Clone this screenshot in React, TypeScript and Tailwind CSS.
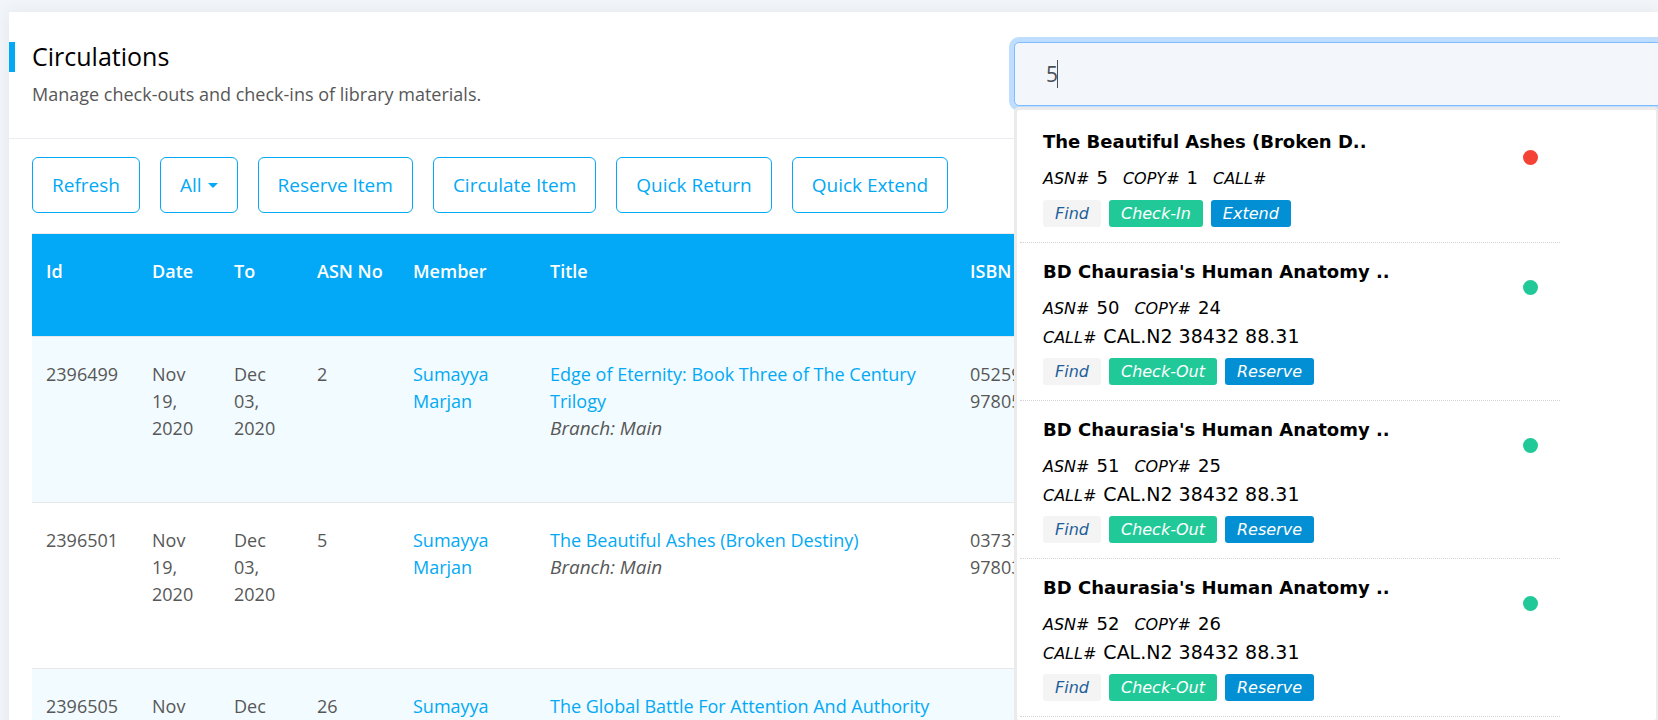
type Loan = {
  id: string;
  from: string[];
  to: string[];
  asn: string;
  member: string;
  title: string;
  branch: string;
  isbn: string[];
};

type Copy = {
  title: string;
  asn: string;
  copy: string;
  call: string;
  available: boolean;
};

const actions = ["Refresh", "All", "Reserve Item", "Circulate Item", "Quick Return", "Quick Extend"];

const loans: Loan[] = [
  {
    id: "2396499",
    from: ["Nov", "19,", "2020"],
    to: ["Dec", "03,", "2020"],
    asn: "2",
    member: "Sumayya Marjan",
    title: "Edge of Eternity: Book Three of The Century Trilogy",
    branch: "Branch: Main",
    isbn: ["05259", "97805"],
  },
  {
    id: "2396501",
    from: ["Nov", "19,", "2020"],
    to: ["Dec", "03,", "2020"],
    asn: "5",
    member: "Sumayya Marjan",
    title: "The Beautiful Ashes (Broken Destiny)",
    branch: "Branch: Main",
    isbn: ["03737", "97803"],
  },
  {
    id: "2396505",
    from: ["Nov", "19,", "2020"],
    to: ["Dec", "03,", "2020"],
    asn: "26",
    member: "Sumayya Marjan",
    title: "The Global Battle For Attention And Authority",
    branch: "Branch: Main",
    isbn: [],
  },
];

const copies: Copy[] = [
  { title: "The Beautiful Ashes (Broken D..", asn: "5", copy: "1", call: "", available: false },
  { title: "BD Chaurasia's Human Anatomy ..", asn: "50", copy: "24", call: "CAL.N2 38432 88.31", available: true },
  { title: "BD Chaurasia's Human Anatomy ..", asn: "51", copy: "25", call: "CAL.N2 38432 88.31", available: true },
  { title: "BD Chaurasia's Human Anatomy ..", asn: "52", copy: "26", call: "CAL.N2 38432 88.31", available: true },
];

function Field({ label, value }: { label: string; value: string }) {
  return (
    <span className="flex h-[29px] items-baseline gap-[7px]">
      <i className="text-[16px] leading-[29px]">{label}</i>
      {value && <span>{value}</span>}
    </span>
  );
}

function Result({ item }: { item: Copy }) {
  const badge = "h-[27px] rounded-[3px] px-3 text-[16px] leading-[27px] italic";
  return (
    <li className="flex w-[540px] items-start justify-between border-b border-dotted border-[#d3d3d3] pt-[14px] pr-[22px] pb-[15px] pl-[23px]">
      <div>
        <h3 className="text-[18px] leading-[29px] font-bold">{item.title}</h3>
        <div className="mt-[7px] flex flex-col text-[18px] leading-[29px]">
          <div className="flex items-baseline gap-[15px]">
            <Field label="ASN#" value={item.asn} />
            <Field label="COPY#" value={item.copy} />
            {!item.call && <Field label="CALL#" value="" />}
          </div>
          {item.call && (
            <div className="text-[19px]">
              <Field label="CALL#" value={item.call} />
            </div>
          )}
        </div>
        <div className="mt-[7px] flex gap-2">
          <button type="button" className={`${badge} bg-[#f4f4f4] text-[#1f5f99]`}>Find</button>
          <button type="button" className={`${badge} bg-[#22c998] text-white`}>
            {item.available ? "Check-Out" : "Check-In"}
          </button>
          <button type="button" className={`${badge} bg-[#038fd3] text-white`}>
            {item.available ? "Reserve" : "Extend"}
          </button>
        </div>
      </div>
      <span
        className={`mt-[23px] size-[15px] rounded-full ${item.available ? "bg-[#22c998]" : "bg-[#f44336]"}`}
      />
    </li>
  );
}

export default function App() {
  return (
    <div className="min-h-screen overflow-x-hidden bg-[#f2f5f9] pt-3 pl-[9px] font-['Open_Sans',sans-serif] text-[18px] leading-[27px] text-[#575757]">
      <main className="min-h-full bg-white shadow-[0_1px_15px_1px_rgba(69,65,78,0.08)]">
        <header className="flex h-[127px] border-b border-[#ebedf2]">
          <div className="flex-1 pt-[30px]">
            <h1 className="border-l-[6px] border-[#03a9f4] pb-[2px] pl-[17px] text-[25px] leading-[28px] text-black">
              Circulations
            </h1>
            <p className="mt-[9px] pl-[23px]">Manage check-outs and check-ins of library materials.</p>
          </div>
          <div className="relative z-10 mt-[30px] -mr-1 h-16 w-[648px] shrink-0">
            <input
              type="text"
              aria-label="Search items"
              defaultValue="5"
              className="h-16 w-full rounded-[5px] border border-[#80bdff] bg-[#f3f6fa] pl-[31px] text-[21px] text-[#495057] caret-transparent shadow-[0_0_0_5px_#bfdeff] outline-none"
            />
            <span className="absolute top-[18px] left-[43px] h-7 w-px bg-[#495057]" />
            <ul className="absolute top-[65px] right-[3px] left-0 rounded-[5px] border-[3px] border-[#ebebeb] bg-white p-[3px] font-['Verdana','DejaVu_Sans',sans-serif] text-black">
              {copies.map((item) => (
                <Result key={item.asn} item={item} />
              ))}
            </ul>
          </div>
        </header>

        <div className="flex gap-5 pt-[18px] pl-[23px]">
          {actions.map((label) => (
            <button
              key={label}
              type="button"
              className="flex h-14 items-center rounded-[6px] border border-[#03a9f4] px-[19px] text-[19px] text-[#03a9f4]"
            >
              {label}
              {label === "All" && (
                <span className="ml-[6px] border-x-[5px] border-t-[5px] border-x-transparent border-t-[#03a9f4]" />
              )}
            </button>
          ))}
        </div>

        <div className="pt-5 pl-[23px]">
          <table className="w-full table-fixed border-collapse text-left align-top">
            <colgroup>
              <col className="w-[106px]" />
              <col className="w-[82px]" />
              <col className="w-[83px]" />
              <col className="w-[96px]" />
              <col className="w-[137px]" />
              <col className="w-[420px]" />
              <col />
            </colgroup>
            <thead>
              <tr className="border-t border-[#ebebeb] bg-[#03a9f7] text-white">
                {["Id", "Date", "To", "ASN No", "Member", "Title", "ISBN"].map((name) => (
                  <th key={name} className="pt-6 pb-[51px] pl-[14px] font-semibold whitespace-nowrap">
                    {name}
                  </th>
                ))}
              </tr>
            </thead>
            <tbody>
              {loans.map((loan) => (
                <tr
                  key={loan.id}
                  className="border-t border-[#e6e9ea] align-top odd:bg-[#f2fbff] [&>td]:pt-6 [&>td]:pb-[60px] [&>td]:pl-[14px]"
                >
                  <td>{loan.id}</td>
                  <td>
                    {loan.from.map((part) => (
                      <div key={part}>{part}</div>
                    ))}
                  </td>
                  <td>
                    {loan.to.map((part) => (
                      <div key={part}>{part}</div>
                    ))}
                  </td>
                  <td>{loan.asn}</td>
                  <td>
                    <a href="#member" className="block w-20 text-[#03a9f4]">{loan.member}</a>
                  </td>
                  <td className="pr-[14px]">
                    <a href="#title" className="block text-[#03a9f4]">{loan.title}</a>
                    <i className="block text-[19px]">{loan.branch}</i>
                  </td>
                  <td>
                    {loan.isbn.map((code) => (
                      <div key={code}>{code}</div>
                    ))}
                  </td>
                </tr>
              ))}
            </tbody>
          </table>
        </div>
      </main>
    </div>
  );
}
